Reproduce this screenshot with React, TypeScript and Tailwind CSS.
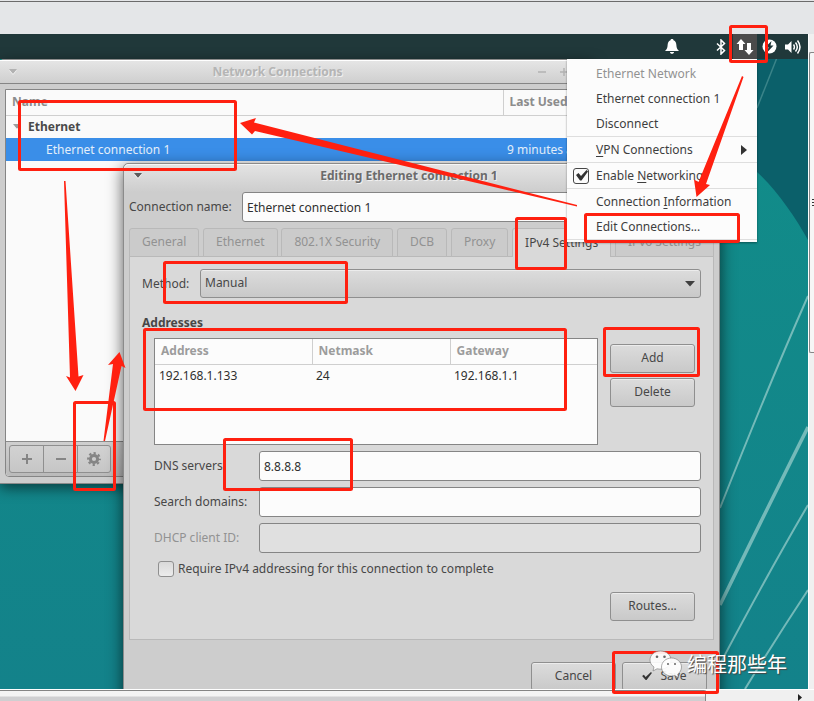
import type { ReactNode } from "react";

const raised =
  "bg-linear-to-b from-[#dcdcdc] to-[#c9c9c9] border border-[#8f8f8f] rounded-[3px] shadow-[inset_0_1px_0_#ececec]";
const entry = "h-[30px] min-w-0 flex-1 rounded-[3px] border border-[#858585] bg-[#fcfcfc] px-1 text-[#2f2f2f] outline-none";

function Wallpaper() {
  return (
    <svg className="absolute inset-0 h-full w-full" aria-hidden="true">
      <defs>
        <linearGradient id="teal" x1="0" y1="0" x2="0" y2="1">
          <stop offset="0" stopColor="#118e89" />
          <stop offset="1" stopColor="#13828a" />
        </linearGradient>
      </defs>
      <rect width="100%" height="100%" fill="url(#teal)" />
      <path d="M560 0H2000V470C870 300 850 255 808 206C795 182 775 154 757 138L600 0Z" fill="#0b606a" />
      <g stroke="#a9d6d2" strokeOpacity=".65" fill="none">
        <path d="M784 6 757 74" strokeWidth="1.5" strokeOpacity=".3" />
        <path d="M808 262Q770 348 720 474" strokeWidth="2" />
        <path d="M808 393Q767 475 720 571" strokeWidth="3.5" />
        <path d="M808 471Q767 541 720 630" strokeWidth="2" />
        <path d="M808 556Q777 603 745 655" strokeWidth="2" />
      </g>
    </svg>
  );
}

function PanelBar() {
  return (
    <header className="relative flex h-[25px] items-center justify-end bg-[#20383a] pr-[7px] text-white">
      <button aria-label="Notifications" className="mr-[33px] flex w-4 justify-center">
        <svg width="14" height="15" viewBox="0 0 14 15" fill="#fff">
          <path d="M7 0C8 0 8.4.6 8.5 1.2 10.7 2 11.3 4 11.4 6.3 11.5 9 12.2 10.5 14 12H0C1.8 10.5 2.5 9 2.6 6.3 2.7 4 3.3 2 5.5 1.2 5.6.6 6 0 7 0ZM5 13h4c0 1-.8 1.8-2 1.8S5 14 5 13Z" />
        </svg>
      </button>
      <button aria-label="Bluetooth" className="mr-1 flex w-4 justify-center">
        <svg width="10" height="16" viewBox="0 0 10 16" fill="none" stroke="#fff" strokeWidth="1.5">
          <path d="m1 4.5 7.5 7L5 15V1l3.500 3.500L1 11.500" />
        </svg>
      </button>
      <button aria-label="Network" className="flex h-[25px] w-6 items-center justify-center bg-[#4b4b4b]">
        <svg width="18" height="18" viewBox="0 0 18 18" fill="#fff">
          <path d="M5 1 0.500 6H3v6h4V6h2.500ZM13 17l4.500-5H15V5h-4v7H8.500Z" />
        </svg>
      </button>
      <button aria-label="Power" className="mx-1 flex w-4 justify-center">
        <svg width="15" height="15" viewBox="0 0 15 15">
          <circle cx="7.500" cy="7.500" r="7" fill="#fff" />
          <path d="M9.500 2 3.500 8h3L5.500 13l6-6.500H8.500Z" fill="#20383a" />
        </svg>
      </button>
      <button aria-label="Volume" className="ml-1 flex w-4 justify-center">
        <svg width="16" height="16" viewBox="0 0 16 16" fill="none" stroke="#fff" strokeWidth="1.500">
          <path d="M0 5.500h3L6.500 2v12L3 10.500H0Z" fill="#fff" stroke="none" />
          <path d="M8.500 5.500q1.800 2.500 0 5M10.500 3.500q3.600 4.500 0 9M12.500 1.500q5 6.500 0 13" />
        </svg>
      </button>
    </header>
  );
}

function TitleArrow({ color }: { color: string }) {
  return (
    <svg width="10" height="6" viewBox="0 0 10 6" aria-hidden="true">
      <path d="M1 0h8L5 5Z" fill={color} />
      <path d="M1.500 1.500 5 5.500 8.500 1.500" stroke="#f2f2f2" strokeWidth=".8" fill="none" />
    </svg>
  );
}

function ConnectionsWindow() {
  return (
    <section className="absolute top-[25px] left-0 flex h-[425px] w-[594px] flex-col rounded-t-[4px] border-t border-b border-[#8b8b8b] bg-[#cdcdcd] shadow-[0_4px_14px_rgba(0,0,0,0.55)]">
      <div className="flex h-6 shrink-0 items-center border-b border-[#858585] bg-linear-to-b from-[#e6e6e6] to-[#cfcfcf] pl-2 shadow-[inset_0_1px_0_#fff]">
        <TitleArrow color="#b2b2b2" />
        <h1 className="flex-1 text-center font-bold text-[#b5b5b5] [text-shadow:1px_1px_0_#f0f0f0]">
          Network Connections
        </h1>
        <div className="flex w-[57px] gap-3 text-[#b2b2b2]">
          {["M1 5h8", "M1 5h8M5 1v8", "M1 1l8 8M9 1 1 9"].map((d) => (
            <svg key={d} width="10" height="10" viewBox="0 0 10 10" stroke="currentColor" strokeWidth="1.500">
              <path d={d} />
            </svg>
          ))}
        </div>
      </div>
      <div className="mx-[5px] mt-[5px] mb-1.5 flex flex-1 flex-col rounded-b-[4px] border border-[#858585] bg-[#fafafa]">
        <table className="w-full table-fixed text-left">
          <thead>
            <tr className="h-[25px] border-b border-[#cfcfcf] text-[#8c8c8c]">
              <th className="border-r border-[#cfcfcf] pl-1.5">Name</th>
              <th className="w-[85px] pl-1.5">Last Used</th>
            </tr>
          </thead>
          <tbody>
            <tr className="h-[23px] text-[#4a4a4a]">
              <th colSpan={2} className="pl-1.5">
                <span className="flex items-center gap-1.5">
                  <TitleArrow color="#9c9c9c" />
                  Ethernet
                </span>
              </th>
            </tr>
            <tr className="h-[23px] bg-[#3a8ee8] text-[#e4effa]">
              <td className="pl-10">Ethernet connection 1</td>
              <td className="pl-1 whitespace-nowrap">9 minutes ago</td>
            </tr>
          </tbody>
        </table>
        <div className="mt-auto flex h-[35px] items-center rounded-b-[4px] border-t border-[#8b8b8b] bg-linear-to-b from-[#cfcfcf] to-[#bababa] px-[3px]">
          <div className="flex h-7 divide-x divide-[#8f8f8f] rounded-[3px] border border-[#8f8f8f] bg-linear-to-b from-[#d2d2d2] to-[#c6c6c6]">
            <button aria-label="Add connection" className="flex w-[34px] items-center justify-center">
              <svg width="10" height="10" viewBox="0 0 10 10" stroke="#858585" strokeWidth="2">
                <path d="M0 5h10M5 0v10" />
              </svg>
            </button>
            <button aria-label="Remove connection" className="flex w-[34px] items-center justify-center">
              <svg width="10" height="10" viewBox="0 0 10 10" stroke="#858585" strokeWidth="2">
                <path d="M0 5h10" />
              </svg>
            </button>
            <button aria-label="Edit connection" className="flex w-8 items-center justify-center">
              <svg width="14" height="14" viewBox="0 0 14 14" fill="none" stroke="#858585">
                <circle cx="7" cy="7" r="3.600" strokeWidth="3" />
                <circle cx="7" cy="7" r="5.800" strokeWidth="2.200" strokeDasharray="2.280 2.275" strokeDashoffset="1.140" />
              </svg>
            </button>
          </div>
        </div>
      </div>
    </section>
  );
}

function Tab({ children, active }: { children: ReactNode; active?: boolean }) {
  return (
    <button
      role="tab"
      aria-selected={!!active}
      className={
        active
          ? "h-[29px] rounded-t-[3px] border border-b-0 border-[#b9b9b9] bg-[#d9d9d9] px-3 text-[#474747]"
          : "h-[29px] rounded-t-[3px] border border-[#b9b9b9] bg-[#cbcbcb] px-3 pb-0.5 text-[#929292]"
      }
    >
      {children}
    </button>
  );
}

function PushButton({ children }: { children: ReactNode }) {
  return (
    <button className={`${raised} flex h-[29px] w-[85px] items-center justify-center gap-2 pb-0.5`}>{children}</button>
  );
}

function EditDialog() {
  return (
    <section className="absolute top-[129px] left-[123px] w-[597px] rounded-t-[5px] border border-[#8b8b8b] bg-[#cdcdcd] text-[#474747] shadow-[0_4px_16px_rgba(0,0,0,0.65)]">
      <div className="flex h-7 items-center rounded-t-[5px] bg-linear-to-b from-[#e4e4e4] to-[#cdcdcd] px-[9px] pb-1 shadow-[inset_0_1px_0_#f6f6f6]">
        <TitleArrow color="#5c5c5c" />
        <h2 className="flex-1 pr-[35px] text-center font-bold text-[#6b6b6b] [text-shadow:1px_1px_0_#f0f0f0]">
          Editing Ethernet connection 1
        </h2>
      </div>
      <div className="px-[5px] pb-3">
        <div className="flex items-center">
          <label htmlFor="name" className="w-[113px]">Connection name:</label>
          <input id="name" defaultValue="Ethernet connection 1" className={entry} />
        </div>
        <div role="tablist" className="relative -mb-px mt-1.5 flex justify-between whitespace-nowrap">
          <Tab>General</Tab>
          <Tab>Ethernet</Tab>
          <Tab>802.1X Security</Tab>
          <Tab>DCB</Tab>
          <Tab>Proxy</Tab>
          <Tab active>IPv4 Settings</Tab>
          <Tab>IPv6 Settings</Tab>
        </div>
        <div role="tabpanel" className="border border-[#b9b9b9] bg-[#d9d9d9] px-3 pt-3 pb-[18px]">
          <div className="flex items-center">
            <label htmlFor="method" className="w-[58px]">Method:</label>
            <div className="relative flex-1">
              <select id="method" className={`${raised} block h-[29px] w-full appearance-none pb-0.5 pl-1 outline-none`}>
                <option>Manual</option>
              </select>
              <svg className="pointer-events-none absolute top-3 right-1.5" width="10" height="6" viewBox="0 0 10 6">
                <path d="M0 0h10L5 5.500Z" fill="#404040" />
              </svg>
            </div>
          </div>
          <h3 className="mt-[15px] leading-5 font-bold">Addresses</h3>
          <div className="mt-[5px] flex gap-3 pr-1.5 pl-3">
            <div className="h-[107px] flex-1 border border-[#858585] bg-[#fcfcfc]">
              <table className="w-full table-fixed text-left">
                <thead>
                  <tr className="h-[25px] border-b border-[#cfcfcf] text-[#9c9c9c]">
                    <th className="w-[157px] border-r border-[#cfcfcf] pl-1.5">Address</th>
                    <th className="w-[138px] border-r border-[#cfcfcf] pl-1.5">Netmask</th>
                    <th className="pl-1.5">Gateway</th>
                  </tr>
                </thead>
                <tbody>
                  <tr className="h-[23px] text-[#2f2f2f]">
                    <td className="pl-1">192.168.1.133</td>
                    <td className="pl-1">24</td>
                    <td className="pl-1">192.168.1.1</td>
                  </tr>
                </tbody>
              </table>
            </div>
            <div className="flex flex-col gap-[5px] pt-1.5">
              <PushButton>Add</PushButton>
              <PushButton>Delete</PushButton>
            </div>
          </div>
          <div className="mt-1.5 flex flex-col gap-1.5 pl-3">
            <div className="flex items-center">
              <label htmlFor="dns" className="w-[105px]">DNS servers:</label>
              <input id="dns" defaultValue="8.8.8.8" className={entry} />
            </div>
            <div className="flex items-center">
              <label htmlFor="search" className="w-[105px]">Search domains:</label>
              <input id="search" className={entry} />
            </div>
            <div className="flex items-center">
              <label htmlFor="dhcp" className="w-[105px] text-[#929292]">DHCP client ID:</label>
              <input
                id="dhcp"
                disabled
                className="h-[30px] min-w-0 flex-1 rounded-[3px] border border-[#858585] bg-[#e0e0e0] px-1"
              />
            </div>
          </div>
          <label className="mt-2 flex h-4 items-center gap-1 pl-4">
            <input
              type="checkbox"
              className="h-4 w-4 appearance-none rounded-[3px] border border-[#8f8f8f] bg-linear-to-b from-[#d9d9d9] to-[#ececec]"
            />
            Require IPv4 addressing for this connection to complete
          </label>
          <div className="mt-[15px] flex justify-end pr-1.5">
            <PushButton>Routes...</PushButton>
          </div>
        </div>
        <div className="mt-[22px] flex justify-end gap-1.5 pr-[7px]">
          <PushButton>Cancel</PushButton>
          <PushButton>
            <svg width="10" height="8" viewBox="0 0 11 9" fill="#333">
              <path d="M0 4.500 2 3l2 2.500L10 0l1 1-6 8H4Z" />
            </svg>
            Save
          </PushButton>
        </div>
      </div>
    </section>
  );
}

function NetworkMenu() {
  const item = "flex h-[25px] w-full items-center pl-[29px] text-left";
  const rule = "border-t border-[#dedede]";
  return (
    <div
      role="menu"
      className="absolute top-[25px] left-[567px] h-[183px] w-[190px] bg-[#fcfcfc] pt-0.5 text-[#3e3e3e] shadow-[0_1px_2px_rgba(0,0,0,0.4)]"
    >
      <button role="menuitem" disabled className={`${item} text-[#929292]`}>Ethernet Network</button>
      <button role="menuitem" className={item}>Ethernet connection 1</button>
      <button role="menuitem" className={item}>Disconnect</button>
      <hr className={rule} />
      <button role="menuitem" className={item}>
        <span><u className="underline-offset-2">V</u>PN Connections</span>
        <svg className="mr-2.5 ml-auto" width="6" height="10" viewBox="0 0 6 10">
          <path d="M0 0v10l6-5Z" fill="#333" />
        </svg>
      </button>
      <hr className={rule} />
      <label className="flex h-[25px] items-center gap-[7px] pl-1.5">
        <span className="relative h-4 w-4">
          <input
            type="checkbox"
            defaultChecked
            className="block h-4 w-4 appearance-none rounded-[3px] border border-[#474747] bg-[#fcfcfc]"
          />
          <svg className="pointer-events-none absolute top-0.5 left-0.5" width="13" height="11" viewBox="0 0 13 11">
            <path d="M1 5 3.500 3l2.500 3L11.500 0 13 1.500 6.500 10.500H5Z" fill="#333" />
          </svg>
        </span>
        <span>Enable <u className="underline-offset-2">N</u>etworking</span>
      </label>
      <hr className={rule} />
      <button role="menuitem" className={item}>
        <span>Connection <u className="underline-offset-2">I</u>nformation</span>
      </button>
      <button role="menuitem" className={item}>Edit Connections...</button>
      <hr className={rule} />
    </div>
  );
}

const boxes = [
  [18, 100, 219, 71],
  [729, 25, 39, 38],
  [584, 213, 156, 30],
  [515, 217, 52, 53],
  [163, 261, 185, 43],
  [143, 328, 424, 83],
  [603, 327, 97, 50],
  [73, 401, 43, 90],
  [223, 438, 130, 53],
  [612, 651, 107, 43],
];

function Annotations() {
  return (
    <svg className="pointer-events-none absolute inset-0 h-full w-full" aria-hidden="true">
      <g fill="none" stroke="#ff2010" strokeWidth="3">
        {boxes.map(([x, y, w, h]) => (
          <rect key={`${x}-${y}`} x={x + 1.5} y={y + 1.5} width={w - 3} height={h - 3} rx="1" />
        ))}
      </g>
      <g fill="#ff2010">
        <path d="M240 123 256 118 254 122.500 577 205 577 206.500 255 131 252 134.500Z" />
        <path d="M742 76 743.500 77 706 184 710 185 696.500 197 694 179.500 698.500 182Z" />
        <path d="M64 181H65.500L78.500 376.500 83.500 375 75.500 391 66 376 70 377.500Z" />
        <path d="M103.500 441H105L121.500 366 125.500 368 119.500 352 108 365 113 364Z" />
      </g>
    </svg>
  );
}

function Watermark() {
  return (
    <div className="pointer-events-none absolute top-[649px] left-[649px] flex items-center gap-[5px] text-white">
      <svg width="33" height="28" viewBox="0 0 33 28" aria-hidden="true">
        <g fill="#fff" fillOpacity=".9" stroke="#777" strokeWidth=".6">
          <path d="M11.500 1C5.300 1 1 5 1 10c0 3 1.500 5.300 4 7l-1 4 4-2.200c8 1.700 14-2.800 14-8.800C22 5 17.500 1 11.500 1Z" />
          <path d="M22.500 8C17 8 12.500 12 12.500 17s4.500 9 10 9c1.200 0 2.200-.200 3.200-.500l3.800 2-.800-3.400C31 22.400 32.500 20 32.500 17c0-5-4.500-9-10-9Z" />
        </g>
        <g fill="#666">
          <circle cx="8" cy="6.800" r="1.300" />
          <circle cx="15.500" cy="6.800" r="1.300" />
          <circle cx="19" cy="14" r="1" />
          <circle cx="26" cy="14" r="1" />
        </g>
      </svg>
      <span className="font-['Noto_Sans_CJK_SC',sans-serif] text-xl leading-[30px] [text-shadow:1px_1px_1px_#444]">
        编程那些年
      </span>
    </div>
  );
}

export default function App() {
  return (
    <div className="relative flex h-screen w-full flex-col overflow-hidden bg-[#e4e6e8] font-['Noto_Sans',sans-serif] text-xs leading-[18px]">
      <div className="mt-px h-[33px] shrink-0 border-t border-[#6b6b6b]" />
      <div className="flex min-h-0 flex-1">
        <main className="relative flex-1 overflow-hidden">
          <Wallpaper />
          <PanelBar />
          <ConnectionsWindow />
          <EditDialog />
          <NetworkMenu />
        </main>
        <div className="w-1.5 border-l border-white bg-[#f0f0f0] pt-[18px]">
          <div className="flex h-[301px] items-center justify-end rounded-l-[2px] border border-r-0 border-[#858585] bg-[#f6f6f6]">
            <div className="h-2 w-0.5 bg-[repeating-linear-gradient(#333_0_1px,#f6f6f6_1px_3px)]" />
          </div>
        </div>
      </div>
      <div className="flex h-3 shrink-0 items-center border-t border-white bg-[#f0f0f0] pr-3">
        <div className="h-full w-[88%] rounded-tr-[2px] border-t border-r border-[#858585] bg-linear-to-b from-[#f4f4f4] from-50% to-[#cfcfd1] to-60%" />
        <svg className="ml-auto mt-1" width="4" height="7" viewBox="0 0 4 7">
          <path d="M0 0v7l4-3.500Z" fill="#222" />
        </svg>
      </div>
      <Annotations />
      <Watermark />
    </div>
  );
}
